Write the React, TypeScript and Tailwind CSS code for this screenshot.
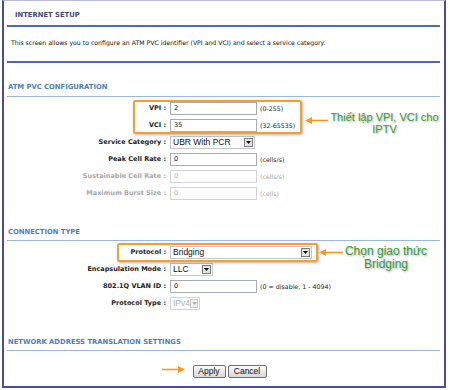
import type { ReactNode } from 'react';

const verdana = { fontFamily: '"DejaVu Sans", Verdana, sans-serif' };

function Label({ children, disabled }: { children: ReactNode; disabled?: boolean }) {
    return (
        <div className={`w-[162px] text-right text-[6.5px] font-bold leading-none ${disabled ? 'text-[#a8a8a8]' : 'text-[#1c1c1c]'}`}>
            {children}
        </div>
    );
}

function TextBox({ value, disabled, width = 'w-[87px]' }: { value: string; disabled?: boolean; width?: string }) {
    return (
        <div className={`ml-[4px] ${width} h-[13px] flex items-center pl-[3px] border bg-white text-[6.5px] ${disabled ? 'border-[#d0d4d8] text-[#b0b0b0]' : 'border-[#a5acb5] text-[#111]'}`}>
            {value}
        </div>
    );
}

function DropButton({ disabled }: { disabled?: boolean }) {
    return (
        <div className={`w-[9px] h-[9px] flex items-center justify-center border ${disabled ? 'border-[#c8c8c8] bg-[#f2f2f2]' : 'border-[#7c7c7c] bg-[#e4e4e4]'}`}>
            <svg width="5" height="3" viewBox="0 0 5 3">
                <path d="M0 0 L5 0 L2.5 3 Z" fill={disabled ? '#b0b0b0' : '#111'} />
            </svg>
        </div>
    );
}

function Select({ value, width, disabled }: { value: string; width: string; disabled?: boolean }) {
    return (
        <div
            className={`ml-[4px] ${width} h-[13px] flex items-center justify-between pl-[2px] pr-[1px] border bg-white text-[8.5px] ${disabled ? 'border-[#d0d4d8] text-[#b0b0b0]' : 'border-[#c4c8cc] text-[#111]'}`}
            style={{ fontFamily: '"Liberation Sans", Arial, sans-serif' }}
        >
            <span>{value}</span>
            <DropButton disabled={disabled} />
        </div>
    );
}

function Hint({ children, disabled }: { children: ReactNode; disabled?: boolean }) {
    return <span className={`ml-[3px] text-[6.3px] ${disabled ? 'text-[#a8a8a8]' : 'text-[#222]'}`}>{children}</span>;
}

function Row({ children }: { children: ReactNode }) {
    return <div className="flex h-[17px] items-center">{children}</div>;
}

function SectionTitle({ children, h, pt }: { children: ReactNode; h: string; pt: string }) {
    return (
        <div className={`${h} ${pt} pl-[4px] text-[6.8px] font-bold leading-[10px] text-[#4c7dbf]`}>{children}</div>
    );
}

function Arrow({ width }: { width: number }) {
    return (
        <svg width={width} height="7" viewBox={`0 0 ${width} 7`}>
            <path d={`M${width} 3.5 L6 3.5`} stroke="#f39a1e" strokeWidth="1.6" />
            <path d="M0 3.5 L7 0 L7 7 Z" fill="#f39a1e" />
        </svg>
    );
}

function ArrowRight({ width }: { width: number }) {
    return (
        <svg width={width} height="7" viewBox={`0 0 ${width} 7`}>
            <path d={`M0 3.5 L${width - 6} 3.5`} stroke="#f39a1e" strokeWidth="1.6" />
            <path d={`M${width} 3.5 L${width - 7} 0 L${width - 7} 7 Z`} fill="#f39a1e" />
        </svg>
    );
}

const noteStyle = {
    fontFamily: '"Liberation Sans", Arial, sans-serif',
    textShadow: '1px 1px 2px rgba(0,0,0,0.35)',
};

export default function App() {
    return (
        <div className="w-[450px] h-[390px] bg-white relative" style={verdana}>
            <div className="ml-[2px] w-[444px] h-[388px] border-l-2 border-r-2 border-b-2 border-t border-l-[#4a4ca4] border-r-[#4a4ca4] border-b-[#4a4ca4] border-t-[#b9bce0] flex flex-col">
                {/* Internet setup box */}
                <div className="h-[24px] pt-[9px] pl-[11px] text-[6.8px] font-bold leading-[10px] text-[#3f4a7c]">INTERNET SETUP</div>
                <div className="ml-[3px] w-[433px] h-[2px] bg-[#4a6cb2]" />
                <div className="h-[34px] pt-[11px] pl-[7px] text-[6.2px] leading-[10px] text-[#111]">
                    This screen allows you to configure an ATM PVC identifier (VPI and VCI) and select a service category.
                </div>
                <div className="ml-[3px] w-[433px] h-[2px] bg-[#4a6cb2]" />

                {/* ATM PVC */}
                <SectionTitle h="h-[33px]" pt="pt-[19px]">ATM PVC CONFIGURATION</SectionTitle>
                <div className="ml-[3px] w-[433px] h-px bg-[#9db7e3]" />
                <div className="mt-[3px] flex flex-col">
                    <Row><Label>VPI :</Label><TextBox value="2" /><Hint>(0-255)</Hint></Row>
                    <Row><Label>VCI :</Label><TextBox value="35" /><Hint>(32-65535)</Hint></Row>
                    <Row><Label>Service Category :</Label><Select value="UBR With PCR" width="w-[85px]" /></Row>
                    <Row><Label>Peak Cell Rate :</Label><TextBox value="0" /><Hint>(cells/s)</Hint></Row>
                    <Row><Label disabled>Sustainable Cell Rate :</Label><TextBox value="0" disabled /><Hint disabled>(cells/s)</Hint></Row>
                    <Row><Label disabled>Maximum Burst Size :</Label><TextBox value="0" disabled /><Hint disabled>(cells)</Hint></Row>
                </div>

                {/* Connection type */}
                <SectionTitle h="h-[38px]" pt="pt-[25px]">CONNECTION TYPE</SectionTitle>
                <div className="ml-[3px] w-[433px] h-px bg-[#9db7e3]" />
                <div className="mt-[3px] flex flex-col">
                    <Row><Label>Protocol :</Label><Select value="Bridging" width="w-[142px]" /></Row>
                    <Row><Label>Encapsulation Mode :</Label><Select value="LLC" width="w-[43px]" /></Row>
                    <Row><Label>802.1Q VLAN ID :</Label><TextBox value="0" /><Hint>(0 = disable, 1 - 4094)</Hint></Row>
                    <Row><Label>Protocol Type :</Label><Select value="IPv4" width="w-[30px]" disabled /></Row>
                </div>

                {/* NAT */}
                <SectionTitle h="h-[38px]" pt="pt-[25px]">NETWORK ADDRESS TRANSLATION SETTINGS</SectionTitle>
                <div className="ml-[3px] w-[433px] h-px bg-[#9db7e3]" />

                <div className="mt-[14px] flex items-center justify-center gap-[2px] pl-[11px]" style={{ fontFamily: '"Liberation Sans", Arial, sans-serif' }}>
                    <button className="w-[33px] h-[13px] border border-[#6f6f6f] rounded-[2px] bg-gradient-to-b from-[#fbfbfb] to-[#d8d8d8] text-[8.5px] leading-none text-[#111]">Apply</button>
                    <button className="w-[39px] h-[13px] border border-[#6f6f6f] rounded-[2px] bg-gradient-to-b from-[#fbfbfb] to-[#d8d8d8] text-[8.5px] leading-none text-[#111]">Cancel</button>
                </div>
            </div>

            {/* Annotations */}
            <div className="absolute left-[133px] top-[100px] w-[169px] h-[34px] border-2 border-[#f5a02a] rounded-[2px] shadow-[1px_1px_3px_rgba(0,0,0,0.3)]" />
            <div className="absolute left-[305px] top-[117px]"><Arrow width={23} /></div>
            <div className="absolute left-[327px] top-[111px] w-[115px] text-center text-[11px] leading-[12px] text-[#3d9b35]" style={noteStyle}>
                Thiết lập VPI, VCI cho<br />IPTV
            </div>

            <div className="absolute left-[117px] top-[243px] w-[201px] h-[19px] border-2 border-[#f5a02a] rounded-[2px] shadow-[1px_1px_3px_rgba(0,0,0,0.3)]" />
            <div className="absolute left-[319px] top-[249px]"><Arrow width={24} /></div>
            <div className="absolute left-[344px] top-[245px] w-[84px] text-center text-[12px] leading-[13px] text-[#3d9b35]" style={noteStyle}>
                Chọn giao thức<br />Bridging
            </div>

            <div className="absolute left-[162px] top-[366px]"><ArrowRight width={23} /></div>
        </div>
    );
}
